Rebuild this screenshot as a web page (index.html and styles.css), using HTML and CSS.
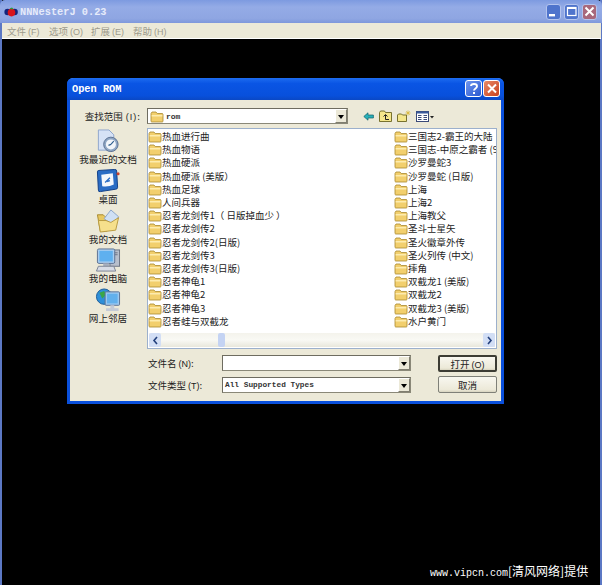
FILE: index.html
```html
<!DOCTYPE html>
<html lang="zh-CN">
<head>
    <meta charset="UTF-8">
    <title>NNNesterJ 0.23</title>
    <link rel="stylesheet" href="styles.css">
</head>
<body>
    <svg class="defs" width="0" height="0">
        <symbol id="folder" viewBox="0 0 14 13">
            <path d="M1 3.5 L2 2 H6 L7.2 3.5 H12.5 L13 4.5 V11.5 L12.3 12 H1.7 L1 11.5 Z" fill="#f2cf6d" stroke="#a8892f" stroke-width="0.8"/>
            <path d="M1.6 5.2 H12.4 V6.4 H1.6 Z" fill="#fff3bf"/>
        </symbol>
    </svg>

    <div class="window">
        <div class="titlebar main-title">
            <svg class="app-icon" width="14" height="10" viewBox="0 0 14 10">
                <circle cx="3.6" cy="5" r="3.2" fill="#14257c"/>
                <circle cx="10.6" cy="5" r="3.2" fill="#14257c"/>
                <circle cx="7.5" cy="5.6" r="3.8" fill="#d8141c"/>
                <path d="M5.5 1.4 L8 0.6 L9.5 2 L7.5 2.6 Z" fill="#2c9a3a"/>
            </svg>
            <span class="title-text">NNNesterJ 0.23</span>
            <div class="caption-btns">
                <span class="cap cap-blue"><svg width="15" height="15" viewBox="0 0 15 15"><rect x="3" y="10" width="6" height="2.4" fill="#fff"/></svg></span>
                <span class="cap cap-blue"><svg width="15" height="15" viewBox="0 0 15 15"><rect x="3.5" y="3.5" width="8.5" height="8" fill="none" stroke="#fff" stroke-width="1.2"/><rect x="3.5" y="3" width="8.5" height="2" fill="#fff"/></svg></span>
                <span class="cap cap-red-dim"><svg width="15" height="15" viewBox="0 0 15 15"><path d="M3.5 3.5 L11.5 11.5 M11.5 3.5 L3.5 11.5" stroke="#fff" stroke-width="2"/></svg></span>
            </div>
        </div>
        <div class="menubar">
            <span>文件<i class="key">(F)</i></span>
            <span>选项<i class="key">(O)</i></span>
            <span>扩展<i class="key">(E)</i></span>
            <span>帮助<i class="key">(H)</i></span>
        </div>
        <div class="screen"></div>
    </div>

    <div class="dialog">
        <div class="titlebar dialog-title">
            <span class="title-text">Open ROM</span>
            <div class="caption-btns">
                <span class="cap big cap-blue-on"><svg width="16" height="17" viewBox="0 0 16 17"><path d="M5 6 C5 3.4 11 3.2 11 6.2 C11 8.4 8 8.4 8 10.6" fill="none" stroke="#fff" stroke-width="1.9"/><rect x="7" y="12" width="2" height="2" fill="#fff"/></svg></span>
                <span class="cap big cap-red"><svg width="16" height="17" viewBox="0 0 16 17"><path d="M4 4.5 L12 12.5 M12 4.5 L4 12.5" stroke="#fff" stroke-width="2"/></svg></span>
            </div>
        </div>
        <div class="dialog-body">
            <label class="look-label">查找范围<i class="key">(I)</i>:</label>
            <div class="toolbar">
                <div class="combo look-combo">
                    <svg width="14" height="13"><use href="#folder"/></svg>
                    <span class="mono">rom</span>
                    <span class="drop"></span>
                </div>
                <div class="tools">
                    <svg width="11" height="9" viewBox="0 0 11 9"><path d="M0.8 4.5 L5 0.8 V3 H10.4 V6 H5 V8.2 Z" fill="#28b0b8" stroke="#10606a" stroke-width="0.7"/></svg>
                    <svg width="13" height="12" viewBox="0 0 13 12"><path d="M0.5 2.5 L1.5 1 H5.5 L6.5 2.5 H12.5 V11.5 H0.5 Z" fill="#f4e68c" stroke="#6a6420" stroke-width="0.9"/><path d="M6.5 9.5 V5 M4.5 6.5 L6.5 4.5 L8.5 6.5 M6.5 9.5 H10" fill="none" stroke="#222" stroke-width="1"/></svg>
                    <svg width="14" height="12" viewBox="0 0 14 12"><path d="M0.5 5 L1.5 4 H4.5 L5.5 5 H9.5 V11.5 H0.5 Z" fill="#f4e68c" stroke="#6a6420" stroke-width="0.9"/><path d="M11 0.5 V5.5 M8.5 3 H13.5 M9.3 1.3 L12.7 4.7 M12.7 1.3 L9.3 4.7" stroke="#d9b93a" stroke-width="0.8"/></svg>
                    <svg width="18" height="11" viewBox="0 0 18 11"><rect x="0.5" y="0.5" width="12" height="10" fill="#fff" stroke="#3a4a78"/><rect x="0.5" y="0.5" width="12" height="2" fill="#3a5a9c"/><path d="M2 4.5 H5.5 M2 6.5 H5.5 M2 8.5 H5.5 M7.5 4.5 H11 M7.5 6.5 H11 M7.5 8.5 H11" stroke="#3a4a78"/><path d="M14 5 H18 L16 7.5 Z" fill="#222"/></svg>
                </div>
            </div>
            <nav class="places">
                <div class="place">
                    <svg width="26" height="26" viewBox="0 0 26 26"><path d="M3 1 H14 L19 6 V22 H3 Z" fill="#d6e2f6" stroke="#8ea6cc"/><circle cx="16" cy="16" r="7.5" fill="#8ea6c4" stroke="#5c7092"/><circle cx="16" cy="16" r="5.2" fill="#f2f5fa"/><path d="M16 16 L19 12.5 M16 16 L13.5 17" stroke="#2f5f8f" stroke-width="1.2"/></svg>
                    <span>我最近的文档</span>
                </div>
                <div class="place">
                    <svg width="26" height="26" viewBox="0 0 26 26"><path d="M2 3 Q2 1.5 3.5 1.5 L20 0.5 Q22 0.5 22 2 L23 19 Q23 21 21 21 L5 23.5 Q3 24 3 22 Z" fill="#2a6cc4" stroke="#123e86"/><path d="M6 6 L18 4.5 L19 16 Q14 19 7 18 Z" fill="#f4f7fc"/><path d="M10 14 L15 9 M12 13 L15 12" stroke="#2a6cc4" stroke-width="1.4"/><circle cx="23.5" cy="5" r="1.6" fill="#c8402c"/></svg>
                    <span>桌面</span>
                </div>
                <div class="place">
                    <svg width="26" height="26" viewBox="0 0 26 26"><path d="M2 6 H8 L10 8 H12 V23 H5 Z" fill="#e8c860" stroke="#a88a30"/><path d="M9 10 L16 1 L24 8 L18 17 Z" fill="#cfe0f4" stroke="#8aa4c8"/><path d="M11 12 L16 14 L24 9 L21 22 L5 24 L3 12 Z" fill="#f6e08c" stroke="#b89a40"/></svg>
                    <span>我的文档</span>
                </div>
                <div class="place">
                    <svg width="26" height="26" viewBox="0 0 26 26"><rect x="15" y="2" width="10" height="17" fill="#b8bfcc" stroke="#6c7484"/><path d="M17 5 H23 M17 7 H23" stroke="#6c7484"/><rect x="2" y="1" width="18" height="15" rx="1.5" fill="#a8cdf0" stroke="#5c7092"/><rect x="4" y="3" width="14" height="11" fill="#5fb0ef"/><path d="M8 16 H14 V19 H8 Z" fill="#a8b0c0"/><path d="M3 19 H19 L21 24 H1 Z" fill="#d8dce6" stroke="#7a8294"/></svg>
                    <span>我的电脑</span>
                </div>
                <div class="place">
                    <svg width="26" height="26" viewBox="0 0 26 26"><circle cx="9" cy="9" r="8" fill="#2f8fd8" stroke="#1c5c98"/><path d="M4 5 L9 3 L11 7 L7 11 Z M10 11 L14 12 L12 16 Z" fill="#3aa648"/><rect x="10" y="4" width="15" height="14" rx="1" fill="#9cc8f0" stroke="#5c7092"/><rect x="12" y="6" width="11" height="10" fill="#62b0ec"/><path d="M15.5 18 H19.5 V21 H15.5 Z M11 21 H24 V24 H11 Z" fill="#c4cad6"/></svg>
                    <span>网上邻居</span>
                </div>
            </nav>
            <div class="main-col">
                <div class="filelist">
                    <ul class="files">
                        <li><svg width="14" height="13"><use href="#folder"/></svg>热血进行曲</li>
                        <li><svg width="14" height="13"><use href="#folder"/></svg>热血物语</li>
                        <li><svg width="14" height="13"><use href="#folder"/></svg>热血硬派</li>
                        <li><svg width="14" height="13"><use href="#folder"/></svg>热血硬派 (美版）</li>
                        <li><svg width="14" height="13"><use href="#folder"/></svg>热血足球</li>
                        <li><svg width="14" height="13"><use href="#folder"/></svg>人间兵器</li>
                        <li><svg width="14" height="13"><use href="#folder"/></svg>忍者龙剑传1（ 日版掉血少 ）</li>
                        <li><svg width="14" height="13"><use href="#folder"/></svg>忍者龙剑传2</li>
                        <li><svg width="14" height="13"><use href="#folder"/></svg>忍者龙剑传2(日版)</li>
                        <li><svg width="14" height="13"><use href="#folder"/></svg>忍者龙剑传3</li>
                        <li><svg width="14" height="13"><use href="#folder"/></svg>忍者龙剑传3(日版)</li>
                        <li><svg width="14" height="13"><use href="#folder"/></svg>忍者神龟1</li>
                        <li><svg width="14" height="13"><use href="#folder"/></svg>忍者神龟2</li>
                        <li><svg width="14" height="13"><use href="#folder"/></svg>忍者神龟3</li>
                        <li><svg width="14" height="13"><use href="#folder"/></svg>忍者蛙与双截龙</li>
                        <li><svg width="14" height="13"><use href="#folder"/></svg>三国志2-霸王的大陆</li>
                        <li><svg width="14" height="13"><use href="#folder"/></svg>三国志-中原之霸者 (9</li>
                        <li><svg width="14" height="13"><use href="#folder"/></svg>沙罗曼蛇3</li>
                        <li><svg width="14" height="13"><use href="#folder"/></svg>沙罗曼蛇 (日版)</li>
                        <li><svg width="14" height="13"><use href="#folder"/></svg>上海</li>
                        <li><svg width="14" height="13"><use href="#folder"/></svg>上海2</li>
                        <li><svg width="14" height="13"><use href="#folder"/></svg>上海教父</li>
                        <li><svg width="14" height="13"><use href="#folder"/></svg>圣斗士星矢</li>
                        <li><svg width="14" height="13"><use href="#folder"/></svg>圣火徽章外传</li>
                        <li><svg width="14" height="13"><use href="#folder"/></svg>圣火列传 (中文)</li>
                        <li><svg width="14" height="13"><use href="#folder"/></svg>摔角</li>
                        <li><svg width="14" height="13"><use href="#folder"/></svg>双截龙1 (美版)</li>
                        <li><svg width="14" height="13"><use href="#folder"/></svg>双截龙2</li>
                        <li><svg width="14" height="13"><use href="#folder"/></svg>双截龙3 (美版)</li>
                        <li><svg width="14" height="13"><use href="#folder"/></svg>水户黄门</li>
                    </ul>
                    <div class="hscroll">
                        <span class="arrow"><svg width="11" height="13" viewBox="0 0 11 13"><path d="M7 3 L4 6.5 L7 10" fill="none" stroke="#23407c" stroke-width="1.6"/></svg></span>
                        <div class="track"><span class="thumb"></span></div>
                        <span class="arrow"><svg width="11" height="13" viewBox="0 0 11 13"><path d="M4 3 L7 6.5 L4 10" fill="none" stroke="#23407c" stroke-width="1.6"/></svg></span>
                    </div>
                </div>
                <div class="form">
                    <label>文件名<i class="key">(N)</i>:</label>
                    <div class="combo"><span class="drop"></span></div>
                    <button class="btn btn-default">打开<i class="key">(O)</i></button>
                    <label>文件类型<i class="key">(T)</i>:</label>
                    <div class="combo"><span class="mono">All Supported Types</span><span class="drop"></span></div>
                    <button class="btn btn-cancel">取消</button>
                </div>
            </div>
        </div>
    </div>

    <div class="watermark"><span class="mono-w">www.vipcn.com</span>[清风网络]提供</div>
</body>
</html>
```

FILE: styles.css
```css
html, body {
    margin: 0;
    padding: 0;
    background: #000;
}
body {
    width: 602px;
    height: 585px;
    overflow: hidden;
    position: relative;
    font-family: "Noto Sans CJK SC", "Liberation Sans", sans-serif;
    font-size: 9.5px;
    color: #222;
}
.defs {
    position: absolute;
}
.key {
    font-family: "Liberation Sans", sans-serif;
    font-style: normal;
    font-size: 9px;
    margin-left: 2px;
}
.window {
    height: 585px;
    box-sizing: border-box;
    border-left: 2px solid #5c78c4;
    border-right: 2px solid #5c78c4;
    display: flex;
    flex-direction: column;
}
.titlebar {
    display: flex;
    align-items: center;
    font-family: "Liberation Mono", monospace;
    font-weight: bold;
    font-size: 10.3px;
    color: #fff;
}
.main-title {
    height: 23px;
    flex: none;
    margin: 0 -2px;
    padding: 0 5px 0 4px;
    border-radius: 5px 5px 0 0;
    background: linear-gradient(#7d9ae0, #94abe6 30%, #8fa6e2 80%, #7f98dc);
    box-sizing: border-box;
}
.app-icon {
    margin-right: 2px;
}
.main-title .title-text {
    color: #e6ebfa;
}
.caption-btns {
    margin-left: auto;
    display: flex;
    gap: 3px;
}
.cap {
    width: 15px;
    height: 16px;
    border-radius: 3px;
    display: flex;
    align-items: center;
    justify-content: center;
    border: 1px solid #b4c4ee;
    box-sizing: border-box;
}
.cap svg {
    flex: none;
}
.cap-blue {
    background: #4f74cc;
}
.cap-red-dim {
    background: #a8687c;
}
.cap.big {
    width: 17px;
    height: 17px;
    border-color: #fff;
}
.cap-blue-on {
    background: linear-gradient(135deg, #6f96ee, #2a58d0);
    margin-right: 1px;
}
.cap-red {
    background: linear-gradient(135deg, #e88a68, #c8401c);
}
.dialog-title .caption-btns {
    gap: 0;
}
.menubar {
    height: 16px;
    flex: none;
    box-sizing: border-box;
    background: #ece9d8;
    border-bottom: 1px solid #fff;
    display: flex;
    gap: 10px;
    padding-left: 5px;
    align-items: center;
    color: #9c9a8c;
    font-size: 9.5px;
    margin-right: -1px;
}
.menubar span {
    width: 32px;
    white-space: nowrap;
}
.screen {
    flex: 1;
    background: #000;
}

.dialog {
    position: absolute;
    left: 67px;
    top: 78px;
    width: 437px;
    height: 326px;
    box-sizing: border-box;
    border: 3px solid #0a50dc;
    border-top: none;
    border-radius: 6px 6px 0 0;
    background: #ece9d8;
    display: flex;
    flex-direction: column;
}
.dialog-title {
    height: 22px;
    flex: none;
    margin: 0 -3px;
    padding: 0 4px 1px 5px;
    border-radius: 6px 6px 0 0;
    background: linear-gradient(#1d6cf0, #0a55e4 25%, #0850dc 80%, #0a48c4);
    box-sizing: border-box;
}
.dialog-body {
    flex: 1;
    display: grid;
    grid-template-columns: 77px 1fr;
    grid-template-rows: 16px 1fr;
    row-gap: 4px;
    padding: 8px 4px 0 0;
    min-height: 0;
}
.look-label {
    align-self: center;
    text-align: right;
    padding-right: 7px;
    white-space: nowrap;
}
.look-label .key {
    margin-left: 3px;
    letter-spacing: 1px;
}
.toolbar {
    display: flex;
    align-items: center;
}
.combo {
    height: 100%;
    box-sizing: border-box;
    background: #fff;
    border: 1px solid #8a8878;
    border-top-color: #6e6c60;
    border-left-color: #6e6c60;
    display: flex;
    align-items: center;
    gap: 2px;
    padding-left: 2px;
}
.look-combo {
    width: 201px;
    height: 16px;
}
.mono {
    font-family: "Liberation Mono", monospace;
    font-size: 7.8px;
    font-weight: bold;
    color: #333;
    white-space: nowrap;
}
.look-combo .mono {
    font-size: 8px;
}
.drop {
    margin-left: auto;
    width: 12px;
    height: 100%;
    box-sizing: border-box;
    flex: none;
    background: #ece9d8;
    border: 1px solid #fff;
    border-right-color: #807e70;
    border-bottom-color: #807e70;
    position: relative;
}
.drop::after {
    content: "";
    position: absolute;
    left: 2px;
    top: 5px;
    border-left: 3.5px solid transparent;
    border-right: 3.5px solid transparent;
    border-top: 4px solid #000;
}
.tools {
    display: flex;
    align-items: center;
    gap: 5px;
    margin-left: 15px;
}
.places {
    display: flex;
    flex-direction: column;
    align-items: center;
    width: 76px;
    margin-top: 1px;
}
.place {
    height: 39.8px;
    display: flex;
    flex-direction: column;
    align-items: center;
    white-space: nowrap;
    font-size: 9.6px;
    line-height: 11px;
}
.place svg {
    flex: none;
    height: 25px;
}
.main-col {
    display: flex;
    flex-direction: column;
    min-height: 0;
}
.filelist {
    height: 221px;
    box-sizing: border-box;
    background: #fff;
    border: 1px solid #9cb0cc;
    display: flex;
    flex-direction: column;
    overflow: hidden;
}
.files {
    list-style: none;
    margin: 0;
    padding: 1px 0 0 0;
    height: 204px;
    box-sizing: border-box;
    flex: none;
    display: grid;
    grid-auto-flow: column;
    grid-template-rows: repeat(15, 13.2px);
    grid-template-columns: 246px 1fr;
    overflow: hidden;
}
.files li {
    display: flex;
    align-items: center;
    white-space: nowrap;
    line-height: 13px;
    overflow: hidden;
}
.files svg {
    flex: none;
}
.hscroll {
    height: 14px;
    flex: none;
    margin: 0 1px;
    display: flex;
    background: linear-gradient(#f4f3ec, #f9f9f4 50%, #e8e7dc);
}
.arrow {
    width: 12px;
    flex: none;
    background: #d2def5;
    border-radius: 2px;
    display: flex;
    align-items: center;
    justify-content: center;
}
.track {
    flex: 1;
    padding-left: 57px;
}
.thumb {
    display: block;
    width: 7px;
    height: 100%;
    background: #c4d3f3;
    border-radius: 2px;
}
.form {
    display: grid;
    grid-template-columns: 75px 189px 27px 59px;
    grid-template-rows: 16px 16px;
    row-gap: 6px;
    margin-top: 6px;
}
.form label {
    align-self: center;
    padding-left: 1px;
    white-space: nowrap;
}
.form .btn {
    grid-column: 4;
}
.btn {
    font-family: inherit;
    font-size: 9.5px;
    color: #222;
    background: linear-gradient(#f8f7f0, #ece9d8 85%, #d8d4c0);
    border: 1px solid #7f8078;
    border-radius: 2px;
    padding: 0;
    height: 17px;
}
.btn-default {
    border: 2px solid #3c3c34;
}
.btn-cancel {
    margin-top: -1px;
}
.watermark {
    position: absolute;
    left: 430px;
    top: 563px;
    color: #fff;
    font-size: 12px;
    line-height: 16px;
    white-space: nowrap;
}
.mono-w {
    font-family: "Liberation Mono", monospace;
    font-size: 10px;
}
```
